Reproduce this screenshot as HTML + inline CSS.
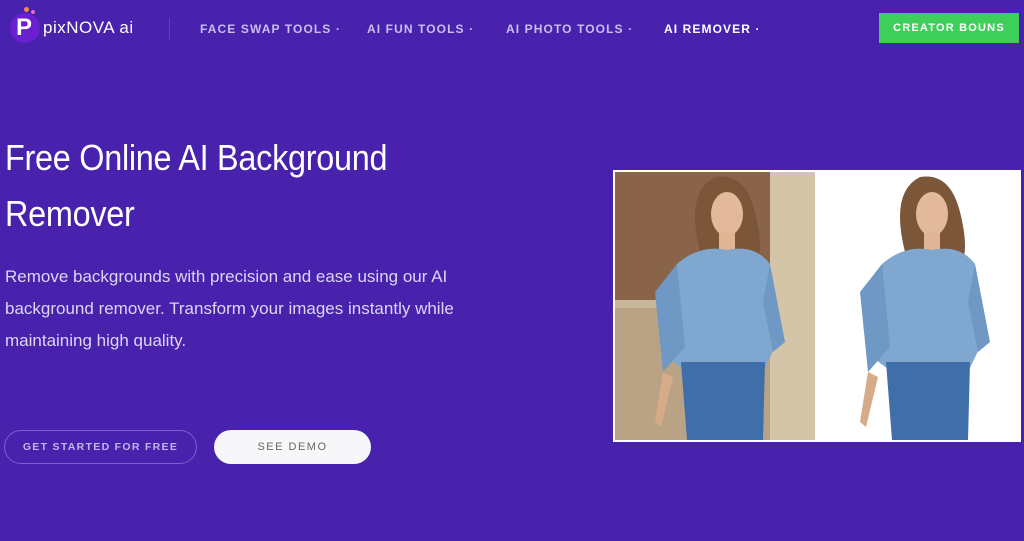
<!DOCTYPE html>
<html><head><style>
*{margin:0;padding:0;box-sizing:border-box}
body{width:1024px;height:541px;overflow:hidden;background:#4821ad;font-family:"Liberation Sans",sans-serif;position:relative;color:#fff}
.nav a{position:absolute;top:22px;font-size:12px;letter-spacing:1.1px;color:#c9bff0;font-weight:bold}
.abs{position:absolute}
</style></head><body>
<div class="abs" style="left:10px;top:13px;width:30px;height:30px;border-radius:50%;background:#6a1fd0"></div>
<div class="abs" style="left:16px;top:14px;font-size:24px;font-weight:bold;color:#fff">P</div>
<div class="abs" style="left:24px;top:7px;width:5px;height:5px;border-radius:50%;background:#f08a50"></div>
<div class="abs" style="left:31px;top:10px;width:4px;height:4px;border-radius:50%;background:#e070c0"></div>
<div class="abs" style="left:43px;top:18px;font-size:17px;color:#fff;letter-spacing:0.5px">pixNOVA ai</div>
<div class="abs" style="left:169px;top:18px;width:1px;height:22px;background:#5f3fbf"></div>
<div class="nav">
<a style="left:200px">FACE SWAP TOOLS ·</a>
<a style="left:367px">AI FUN TOOLS ·</a>
<a style="left:506px">AI PHOTO TOOLS ·</a>
<a style="left:664px;color:#fff">AI REMOVER ·</a>
</div>
<div class="abs" style="left:879px;top:13px;width:140px;height:30px;background:#3ecf5a;color:#fff;font-size:11px;font-weight:bold;letter-spacing:1.2px;text-align:center;line-height:30px">CREATOR BOUNS</div>
<div class="abs" style="left:5px;top:130px;font-size:36px;line-height:56px;letter-spacing:-0.3px;transform:scaleX(0.9);transform-origin:left">Free Online AI Background<br>Remover</div>
<div class="abs" style="left:5px;top:261px;width:480px;font-size:17px;line-height:32px;color:#ddd6f5">Remove backgrounds with precision and ease using our AI<br>background remover. Transform your images instantly while<br>maintaining high quality.</div>
<div class="abs" style="left:4px;top:430px;width:193px;height:34px;border:1px solid #7a60c8;border-radius:17px;text-align:center;line-height:32px;font-size:10.5px;font-weight:bold;letter-spacing:1.3px;color:#c2b6ee">GET STARTED FOR FREE</div>
<div class="abs" style="left:214px;top:430px;width:157px;height:34px;background:#f7f7fa;border-radius:17px;text-align:center;line-height:34px;font-size:11px;letter-spacing:1.5px;color:#666">SEE DEMO</div>
<div class="abs" style="left:613px;top:170px;width:408px;height:272px;background:#fff"></div>
<svg class="abs" style="left:615px;top:172px" width="405" height="268" viewBox="0 0 405 268">
<rect width="200" height="268" fill="#b9a384"/>
<rect width="160" height="128" fill="#8a6448"/>
<rect x="155" width="45" height="268" fill="#d4c4a8"/>
<rect y="128" width="160" height="8" fill="#c9b79b"/>
<g id="w">
<path d="M85 80 Q70 20 100 5 Q130 0 140 40 Q150 80 140 95 L80 95Z" fill="#7b5638"/>
<ellipse cx="112" cy="42" rx="16" ry="22" fill="#e2b99a"/>
<rect x="104" y="60" width="16" height="20" fill="#e0b595"/>
<path d="M62 92 Q85 72 112 78 Q140 72 155 92 L160 175 L148 200 L72 200 L52 185Z" fill="#7fa7cf"/>
<path d="M40 120 L62 92 L70 175 L48 200Z" fill="#6f98c4"/>
<path d="M155 92 L170 170 L158 180 L148 130Z" fill="#6f98c4"/>
<path d="M66 190 L150 190 L148 268 L72 268Z" fill="#3f6ea8"/>
<path d="M48 200 L40 250 L46 255 L58 205Z" fill="#d7aa88"/>
</g>
<use href="#w" x="205" y="0"/>
</svg>
</body></html>
